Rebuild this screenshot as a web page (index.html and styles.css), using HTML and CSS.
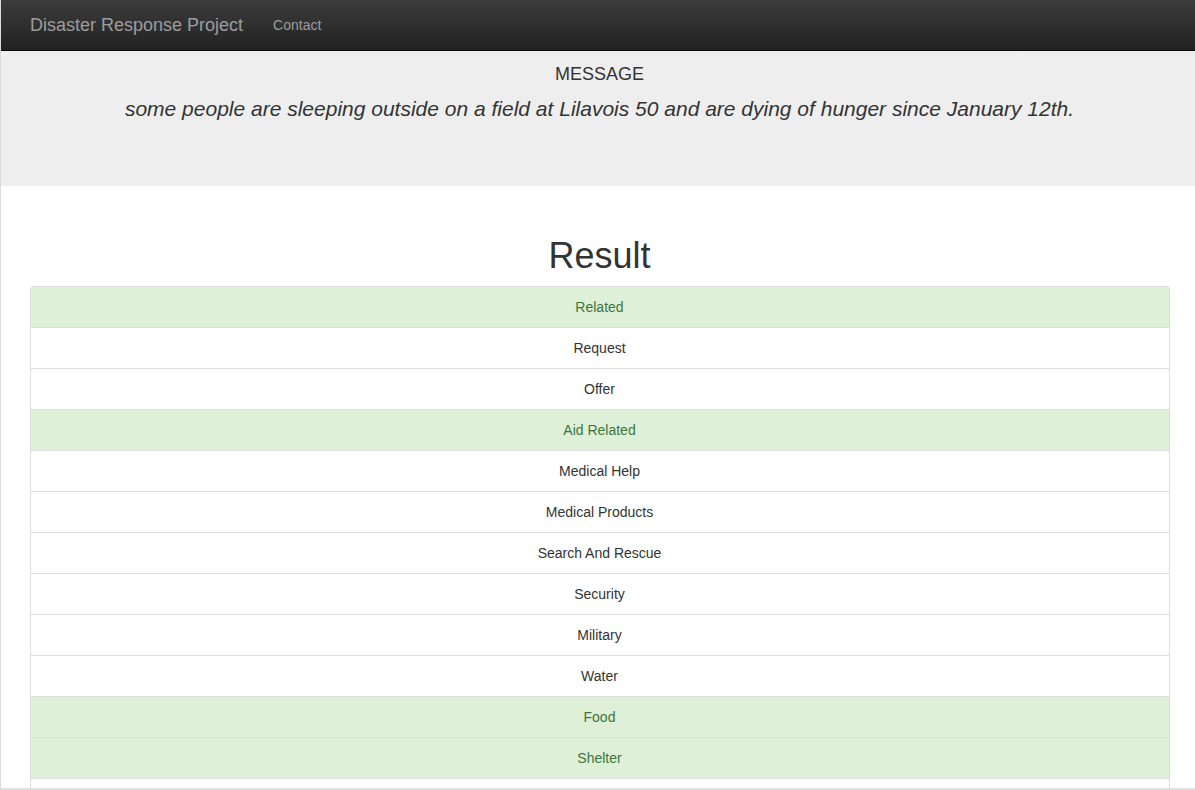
FILE: index.html
```html
<!DOCTYPE html>
<html lang="en">
<head>
<meta charset="utf-8">
<title>Disaster Response Project</title>
<link rel="stylesheet" href="styles.css">
</head>
<body>
<div class="frame">
  <nav class="navbar">
    <div class="container nav-inner">
      <a class="brand" href="#">Disaster Response Project</a>
      <a class="nav-link" href="#">Contact</a>
    </div>
  </nav>
  <div class="jumbotron">
    <div class="container">
      <h4 class="msg-label">MESSAGE</h4>
      <p class="msg-text">some people are sleeping outside on a field at Lilavois 50 and are dying of hunger since January 12th.</p>
    </div>
  </div>
  <div class="container">
    <h1 class="result-title">Result</h1>
    <ul class="list-group">
      <li class="item success">Related</li>
      <li class="item">Request</li>
      <li class="item">Offer</li>
      <li class="item success">Aid Related</li>
      <li class="item">Medical Help</li>
      <li class="item">Medical Products</li>
      <li class="item">Search And Rescue</li>
      <li class="item">Security</li>
      <li class="item">Military</li>
      <li class="item">Water</li>
      <li class="item success">Food</li>
      <li class="item success">Shelter</li>
      <li class="item item-empty"></li>
    </ul>
  </div>
</div>
</body>
</html>
```
FILE: styles.css
```css
html, body {
  margin: 0;
  padding: 0;
  background: #fff;
}
body {
  font-family: "Liberation Sans", Arial, Helvetica, sans-serif;
  font-size: 14px;
  line-height: 1.42857;
  color: #333;
}
.frame {
  box-sizing: border-box;
  height: 790px;
  overflow: hidden;
  border-left: 1px solid #dcdcdc;
  border-bottom: 2px solid #e0e0e4;
}
.container {
  padding: 0 26px 0 29px;
}
.navbar {
  height: 50px;
  background: linear-gradient(to bottom, #3c3c3c 0%, #222 100%);
  border-bottom: 1px solid #080808;
}
.nav-inner {
  display: flex;
  align-items: center;
  height: 50px;
}
.brand {
  font-size: 18px;
  line-height: 20px;
  color: #9d9d9d;
  text-decoration: none;
  padding-right: 15px;
}
.nav-link {
  font-size: 14px;
  line-height: 20px;
  color: #9d9d9d;
  text-decoration: none;
  padding-left: 15px;
}
.jumbotron {
  background: #eee;
  height: 135px;
  box-sizing: border-box;
  padding-top: 13px;
}
.msg-label {
  margin: 0;
  font-size: 18px;
  font-weight: normal;
  line-height: 20px;
  text-align: center;
  color: #333;
}
.msg-text {
  margin: 10px 0 0;
  font-size: 21px;
  font-style: italic;
  line-height: 30px;
  text-align: center;
  color: #333;
}
.result-title {
  margin: 50px 0 10px;
  font-size: 36px;
  font-weight: 500;
  line-height: 39.6px;
  text-align: center;
  color: #333;
}
.list-group {
  list-style: none;
  margin: 0 -1px 0 0;
  padding: 0;
}
.item {
  padding: 10px 16px 10px 15px;
  line-height: 20px;
  min-height: 20px;
  text-align: center;
  background: #fff;
  border: 1px solid #ddd;
  margin-bottom: -1px;
}
.item:first-child {
  border-top-left-radius: 4px;
  border-top-right-radius: 4px;
}
.item.success {
  background: #dff0d8;
  color: #3c763d;
}
```
